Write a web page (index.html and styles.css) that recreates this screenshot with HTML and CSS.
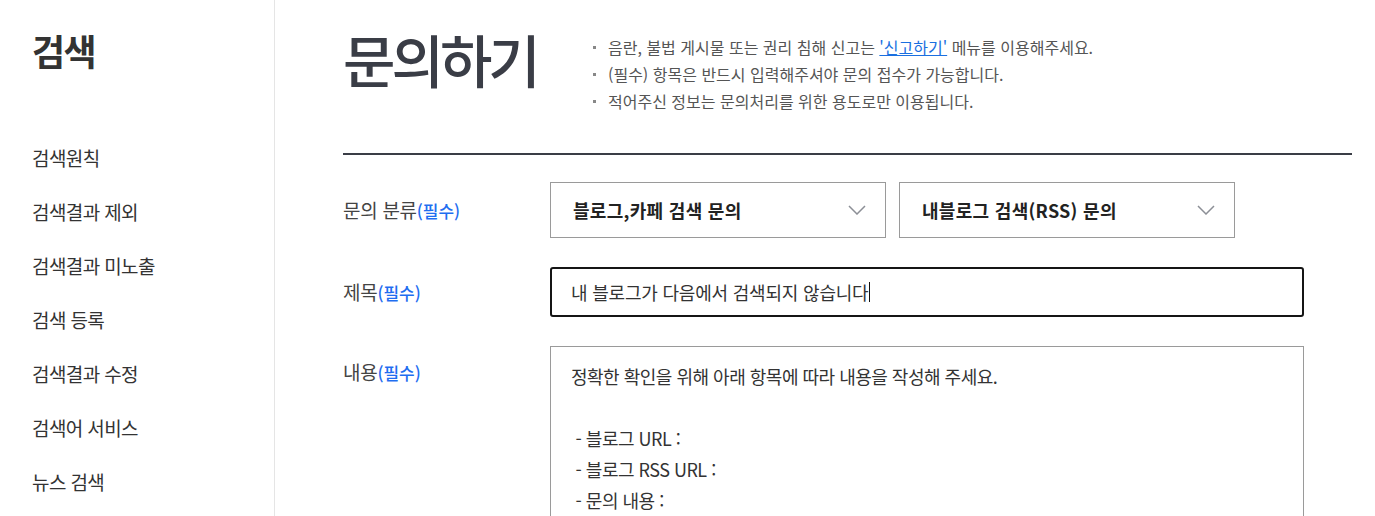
FILE: index.html
```html
<!DOCTYPE html>
<html lang="ko">
<head>
    <meta charset="UTF-8">
    <meta name="viewport" content="width=device-width, initial-scale=1.0">
    <title>문의하기</title>
    <link rel="stylesheet" href="styles.css">
</head>
<body>
    <div class="wrap">
        <!-- 사이드 메뉴 -->
        <aside class="side">
            <h2 class="side-title">검색</h2>
            <ul class="side-menu">
                <li>검색원칙</li>
                <li>검색결과 제외</li>
                <li>검색결과 미노출</li>
                <li>검색 등록</li>
                <li>검색결과 수정</li>
                <li>검색어 서비스</li>
                <li>뉴스 검색</li>
            </ul>
        </aside>

        <!-- 본문 -->
        <main class="content">
            <div class="head">
                <h1 class="title">문의하기</h1>
                <ul class="notice">
                    <li>음란, 불법 게시물 또는 권리 침해 신고는 <a href="#">'신고하기'</a> 메뉴를 이용해주세요.</li>
                    <li>(필수) 항목은 반드시 입력해주셔야 문의 접수가 가능합니다.</li>
                    <li>적어주신 정보는 문의처리를 위한 용도로만 이용됩니다.</li>
                </ul>
            </div>

            <div class="form">
                <div class="row">
                    <div class="label">문의 분류<em>(필수)</em></div>
                    <div class="field selects">
                        <div class="select">
                            <span>블로그,카페 검색 문의</span>
                            <svg class="arrow" width="18" height="10" viewBox="0 0 18 10"><path d="M1 1l8 8 8-8" fill="none" stroke="#8c8f96" stroke-width="1.5"/></svg>
                        </div>
                        <div class="select">
                            <span>내블로그 검색(RSS) 문의</span>
                            <svg class="arrow" width="18" height="10" viewBox="0 0 18 10"><path d="M1 1l8 8 8-8" fill="none" stroke="#8c8f96" stroke-width="1.5"/></svg>
                        </div>
                    </div>
                </div>

                <div class="row">
                    <div class="label label-input">제목<em>(필수)</em></div>
                    <div class="field">
                        <div class="input">내 블로그가 다음에서 검색되지 않습니다<span class="caret"></span></div>
                    </div>
                </div>

                <div class="row">
                    <div class="label label-area">내용<em>(필수)</em></div>
                    <div class="field">
                        <div class="textarea">정확한 확인을 위해 아래 항목에 따라 내용을 작성해 주세요.

 - 블로그 URL :
 - 블로그 RSS URL :
 - 문의 내용 :</div>
                    </div>
                </div>
            </div>
        </main>
    </div>
</body>
</html>
```

FILE: styles.css
```css
/* 기본 */
* {
    box-sizing: border-box;
}

body {
    margin: 0;
    font-family: "Noto Sans CJK KR", "Noto Sans", sans-serif;
    color: #333;
    background: #fff;
}

ul {
    margin: 0;
    padding: 0;
    list-style: none;
}

.wrap {
    display: flex;
    min-height: 516px;
}

/* 사이드 메뉴 */
.side {
    width: 275px;
    flex-shrink: 0;
    border-right: 1px solid #e5e5e5;
    padding: 25px 0 0 32px;
}

.side-title {
    margin: 0;
    font-size: 36px;
    font-weight: 700;
    letter-spacing: -1.5px;
    line-height: 50px;
    color: #333;
}

.side-menu {
    margin-top: 69px;
}

.side-menu li {
    font-size: 19px;
    letter-spacing: -0.6px;
    line-height: 28px;
    height: 54px;
    color: #333;
}

/* 본문 */
.content {
    flex: 1;
    padding: 0 23px 0 68px;
}

.head {
    display: flex;
    align-items: flex-start;
    border-bottom: 2px solid #3a3d46;
    height: 155px;
}

.title {
    margin: 20px 0 0;
    font-size: 57px;
    font-weight: 500;
    letter-spacing: -4px;
    line-height: 76px;
    color: #3a3d46;
    width: 250px;
}

.notice {
    margin-top: 34px;
}

.notice li {
    position: relative;
    padding-left: 15px;
    font-size: 16px;
    letter-spacing: 0;
    line-height: 27px;
    color: #555;
}

.notice li::before {
    content: "";
    position: absolute;
    left: 0;
    top: 12px;
    width: 3px;
    height: 3px;
    background: #888;
}

.notice a {
    color: #1a6fe0;
    text-decoration: underline;
}

/* 폼 */
.form {
    padding-top: 27px;
}

.row {
    display: flex;
    margin-bottom: 28px;
}

.label {
    width: 207px;
    flex-shrink: 0;
    font-size: 19px;
    letter-spacing: -0.3px;
    color: #444;
    line-height: 56px;
}

.label em {
    font-style: normal;
    font-size: 17px;
    font-weight: 500;
    color: #1f6ef0;
    letter-spacing: 0;
}

.label-input {
    line-height: 50px;
}

.label-area {
    line-height: 52px;
}

.field {
    flex: 1;
}

.selects {
    display: flex;
    gap: 13px;
}

.select {
    width: 336px;
    height: 56px;
    border: 1px solid #9a9a9a;
    display: flex;
    align-items: center;
    justify-content: space-between;
    padding: 0 19px 0 22px;
    font-size: 18px;
    font-weight: 700;
    letter-spacing: 0.3px;
    color: #222;
}

.input {
    width: 754px;
    height: 50px;
    border: 2px solid #151515;
    border-radius: 3px;
    padding: 0 19px;
    display: flex;
    align-items: center;
    font-size: 18px;
    letter-spacing: -0.2px;
    color: #333;
}

.caret {
    display: inline-block;
    width: 1px;
    height: 20px;
    margin-left: 1px;
    background: #111;
}

.textarea {
    width: 754px;
    height: 240px;
    border: 1px solid #9a9a9a;
    padding: 14px 20px;
    font-size: 18px;
    letter-spacing: -0.5px;
    line-height: 31px;
    color: #333;
    white-space: pre-wrap;
}
```
